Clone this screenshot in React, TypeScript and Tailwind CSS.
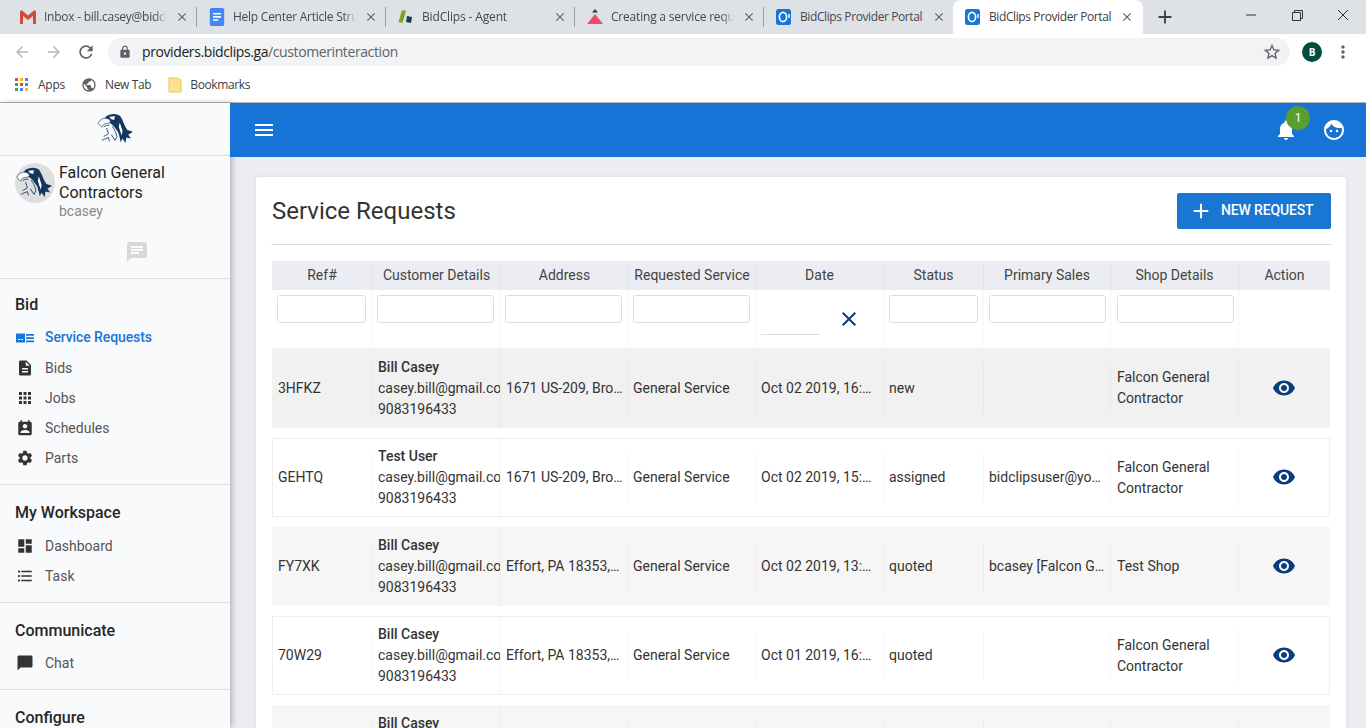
import React from "react";
import {
  MdAdd, MdApps, MdArrowBack, MdArrowForward, MdChat, MdChatBubble, MdClose, MdDashboard, MdDescription, MdFace,
  MdFormatListBulleted, MdLock, MdMenu, MdMoreVert, MdNotifications, MdPermContactCalendar, MdPublic, MdRefresh,
  MdSettings, MdStarBorder, MdVisibility,
} from "react-icons/md";

const Falcon = ({ className }: { className?: string }) => (
  <svg viewBox="0 0 40 34" className={className}>
    <path fill="#12375f" d="M9 4C14 0 22 0 25 4C28 9 29 14 32 18L38 20L33 23L36 27L31 26L30 32L27 27L25 31C24 26 23 22 22 20C19 16 17 13 14 11C11 10 9 10 7 9Z" />
    <path fill="#fff" stroke="#12375f" strokeWidth="0.7" d="M1 11C3 6 9 4 13 7C15 9 14 11 11 11C8 11 6 12 5 15C3 14 2 12 1 11Z" />
    <path fill="#fff" d="M13 4L19 3.5L18 7.5L14.5 6.5Z" />
    <path fill="#fff" d="M24 10L27 19L26 24L23 15Z" />
    <path fill="none" stroke="#12375f" strokeWidth="0.9" d="M7 15C8 13 11 13 13 13M10 16L12 22L7 25M5 29L12 26L13 30M15 23L19 29L21 25M16 14C18 17 20 20 21 25" />
  </svg>
);

const Gmail = () => (
  <svg viewBox="0 0 16 14" className="w-4 h-[14px]">
    <path fill="#d54c3f" d="M0 1.5V14H3V6L8 10L13 6V14H16V1.5L14.5 0L8 5.5L1.5 0Z" />
  </svg>
);
const Docs = () => (
  <svg viewBox="0 0 16 20" className="w-[16px] h-[18px]">
    <path fill="#4285f4" d="M2 0H14C15 0 16 1 16 2V18C16 19 15 20 14 20H2C1 20 0 19 0 18V2C0 1 1 0 2 0Z" />
    <path fill="#fff" d="M3.5 5.5H12.5V7.2H3.5ZM3.5 9H12.5V10.7H3.5ZM3.5 12.5H9.5V14.2H3.5Z" />
  </svg>
);
const Clip = () => (
  <svg viewBox="0 0 16 16" className="w-4 h-4">
    <path fill="#7ba428" d="M4 1L8 2L4.5 14L0.5 13Z" />
    <path fill="#12414d" d="M9 7L14 8L13 14L8 13Z" />
  </svg>
);
const Peak = () => (
  <svg viewBox="0 0 16 16" className="w-4 h-4">
    <path fill="#12414d" d="M8 0L11 3.5H5Z" />
    <path fill="#ee4d65" d="M8 5L16 15H0Z" />
  </svg>
);
const Portal = () => (
  <svg viewBox="0 0 16 16" className="w-4 h-4">
    <rect width="15" height="16" rx="2.5" fill="#1976d2" />
    <ellipse cx="7" cy="8" rx="3.6" ry="4.6" fill="none" stroke="#fff" strokeWidth="1.6" />
    <path stroke="#fff" strokeWidth="1.4" d="M13 5V9" />
  </svg>
);

const tabs = [
  { t: "Inbox - bill.casey@bidclips.com", i: <Gmail />, k: "tracking-[-0.25px]" },
  { t: "Help Center Article Structure", i: <Docs />, k: "tracking-[-0.25px]" },
  { t: "BidClips - Agent", i: <Clip />, k: "tracking-[-0.15px]" },
  { t: "Creating a service request", i: <Peak />, k: "tracking-[-0.2px]" },
  { t: "BidClips Provider Portal", i: <Portal />, k: "tracking-[-0.4px]" },
];

function Tabs() {
  return (
    <div className="h-[34px] bg-[#dee1e6] flex items-center pl-2 shrink-0 relative">
      {tabs.map((x, n) => (
        <div key={n} className="w-[189px] h-[34px] flex items-center pl-[4px]">
          <div className={`w-full h-[20px] flex items-center pl-[8px] pr-[7px] gap-[8px] ${n < 4 ? "border-r border-[#9ca0a6]" : ""}`}>
            <div className="w-4 flex justify-center shrink-0">{x.i}</div>
            <span className={`flex-1 overflow-hidden whitespace-nowrap text-[12px] text-[#45494e] font-['Open_Sans',sans-serif] ${x.k} ${n === 4 ? "" : "[mask-image:linear-gradient(to_right,black_90%,transparent)]"}`}>{x.t}</span>
            <MdClose className="text-[#5f6368] shrink-0" size={14} />
          </div>
        </div>
      ))}
      <div className="w-[190px] h-[34px] bg-white rounded-t-[8px] flex items-center pl-[12px] pr-[9px] gap-[8px]">
        <Portal />
        <span className="flex-1 overflow-hidden whitespace-nowrap text-[12px] tracking-[-0.4px] text-[#3c4043] font-['Open_Sans',sans-serif]">BidClips Provider Portal</span>
        <MdClose className="text-[#5f6368] shrink-0" size={14} />
      </div>
      <MdAdd className="text-[#3c4043] ml-[11px]" size={22} />
      <div className="flex-1" />
      <div className="flex items-center self-start h-[30px] text-[#333]">
        <svg viewBox="0 0 46 16" className="w-[46px] h-4"><path stroke="#333" d="M18 8H28" /></svg>
        <svg viewBox="0 0 46 16" className="w-[46px] h-4"><path stroke="#333" fill="none" d="M18.5 5.5H26.5V13.5H18.5ZM20.5 5.5V3.5H28.5V11.5H26.5" /></svg>
        <svg viewBox="0 0 46 16" className="w-[46px] h-4"><path stroke="#333" d="M18 3L28 13M28 3L18 13" /></svg>
      </div>
    </div>
  );
}

function Toolbar() {
  return (
    <div className="h-[36px] flex items-center bg-white shrink-0">
      <MdArrowBack className="ml-[13px] text-[#b4b7bb]" size={18} />
      <MdArrowForward className="ml-[14px] text-[#b4b7bb]" size={18} />
      <MdRefresh className="ml-[13px] text-[#5f6368]" size={20} />
      <div className="ml-[12px] w-[1182px] h-[28px] rounded-full bg-[#f1f3f4] flex items-center pl-[10px] pr-[8px]">
        <MdLock className="text-[#5f6368]" size={14} />
        <span className="ml-[10px] pb-[2px] text-[14px] font-['Open_Sans',sans-serif] tracking-[-0.4px] text-[#202124]">providers.bidclips.ga<span className="text-[#5f6368]">/customerinteraction</span></span>
        <div className="flex-1" />
        <MdStarBorder className="text-[#5f6368]" size={20} />
      </div>
      <div className="ml-[12px] w-5 h-5 rounded-full bg-[#004d40] text-white text-[10px] font-bold flex items-center justify-center font-['Open_Sans',sans-serif]">B</div>
      <MdMoreVert className="ml-[11px] text-[#5f6368]" size={20} />
    </div>
  );
}

function AppsGrid() {
  const c = ["#ea4335", "#fbbc05", "#4285f4", "#34a853", "#ea4335", "#4285f4", "#34a853", "#4285f4", "#fbbc05"];
  return (
    <div className="grid grid-cols-3 gap-[2px] w-[13px]">
      {c.map((b, i) => (
        <span key={i} className="w-[3px] h-[3px]" style={{ background: b }} />
      ))}
    </div>
  );
}

function Bookmarks() {
  return (
    <div className="h-[33px] pb-[3px] flex items-center bg-white border-b border-[#b4b4b4] text-[12px] text-[#3c4043] font-['Open_Sans',sans-serif] shrink-0 pl-[15px]">
      <AppsGrid />
      <span className="ml-[10px] tracking-[-0.25px]">Apps</span>
      <MdPublic className="ml-[16px] text-[#5f6368]" size={16} />
      <span className="ml-[8px] tracking-[-0.35px]">New Tab</span>
      <svg viewBox="0 0 14 16" className="ml-[17px] w-[14px] h-4"><path fill="#fde293" stroke="#e8c75a" d="M1 1H9L13 3V15H1Z" /></svg>
      <span className="ml-[8px] tracking-[-0.4px]">Bookmarks</span>
    </div>
  );
}

const ReqIcon = () => (
  <svg viewBox="0 0 18 12" className="w-[18px] h-3">
    <path fill="#1976d2" d="M0 1.5H9V10.5H0Z" />
    <path fill="#fff" d="M2 7H4V8H2ZM5 7H7V8H5Z" />
    <path fill="#1976d2" d="M10 2H18V3.7H10ZM10 5.2H18V6.9H10ZM10 8.5H18V10.2H10Z" />
  </svg>
);

function Item({ icon, label, active, tall }: { icon: React.ReactNode; label: string; active?: boolean; tall?: boolean }) {
  return (
    <div className={`${tall ? "h-[31px]" : "h-[30px]"} flex items-center pl-[16px] text-[14px] ${active ? "text-[#1976d2] font-medium tracking-[-0.1px]" : "text-[#555]"}`}>
      <div className="w-[18px] flex justify-center text-[#333]">{icon}</div>
      <span className="ml-[11px]">{label}</span>
    </div>
  );
}

const sectionTitle = "text-[16px] leading-[24px] font-medium text-[#262626] pl-[15px]";

function Sidebar() {
  return (
    <aside className="w-[230px] shrink-0 bg-[#f9fafc] shadow-[2px_0_6px_rgba(0,0,0,0.25)] z-10 font-[Roboto,sans-serif] overflow-hidden">
      <div className="h-[53px] border-b border-[#dcdde0] flex items-center justify-center pl-[1px]">
        <Falcon className="w-[38px] h-[32px]" />
      </div>
      <div className="h-[123px] border-b border-[#dcdde0]">
        <div className="flex pl-[15px] pt-[7px]">
          <div className="w-[40px] h-[40px] rounded-full bg-[#dedede] flex items-center justify-center shrink-0">
            <Falcon className="w-[38px] h-[34px]" />
          </div>
          <div className="ml-[4px]">
            <div className="text-[16px] leading-[20px] text-[#222]">Falcon General<br />Contractors</div>
            <div className="text-[14px] leading-[18px] text-[#888] -mt-[1px]">bcasey</div>
          </div>
        </div>
        <MdChat className="text-[#d8d8d8] ml-[125px] mt-[20px]" size={24} />
      </div>
      <section className="h-[206px] border-b border-[#dcdde0] pt-[14px]">
        <h3 className={`${sectionTitle} mb-[5px]`}>Bid</h3>
        <Item icon={<ReqIcon />} label="Service Requests" active tall />
        <Item icon={<MdDescription size={20} />} label="Bids" />
        <Item icon={<MdApps size={22} />} label="Jobs" />
        <Item icon={<MdPermContactCalendar size={21} />} label="Schedules" />
        <Item icon={<MdSettings size={22} />} label="Parts" />
      </section>
      <section className="h-[118px] border-b border-[#dcdde0] pt-[16px]">
        <h3 className={`${sectionTitle} mb-[6px]`}>My Workspace</h3>
        <Item icon={<MdDashboard size={22} />} label="Dashboard" />
        <Item icon={<MdFormatListBulleted size={22} />} label="Task" />
      </section>
      <section className="h-[87px] border-b border-[#dcdde0] pt-[16px]">
        <h3 className={`${sectionTitle} mb-[5px]`}>Communicate</h3>
        <Item icon={<MdChatBubble size={22} />} label="Chat" />
      </section>
      <section className="pt-[16px]">
        <h3 className={sectionTitle}>Configure</h3>
      </section>
    </aside>
  );
}

const gridCols = "grid grid-cols-[100px_128px_128px_127px_128px_100px_127px_128px_92px]";
const heads = ["Ref#", "Customer Details", "Address", "Requested Service", "Date", "Status", "Primary Sales", "Shop Details", "Action"];
const filterPad = ["pl-[5px] pr-[6px]", "pl-[4px] pr-[6px]", "pl-[4px] pr-[6px]", "pl-[4px] pr-[5px]", "pl-[4px]", "pl-[5px] pr-[5px]", "pl-[5px] pr-[4px]", "pl-[6px] pr-[4px]", ""];

const boxed = "bg-white h-[79px] ring-1 ring-inset ring-[#eeeeee] mt-[10px]";
const shaded = "bg-[#f6f6f6] h-[79px] mt-[10px]";

const rows = [
  { ref: "3HFKZ", name: "Bill Casey", addr: "1671 US-209, Brodheadsville, PA", date: "Oct 02 2019, 16:30:21", status: "new", sales: "", shop: "Falcon General Contractor", cls: "bg-[#f1f1f1] h-[80px]" },
  { ref: "GEHTQ", name: "Test User", addr: "1671 US-209, Brodheadsville, PA", date: "Oct 02 2019, 15:12:40", status: "assigned", sales: "bidclipsuser@yopmail.com", shop: "Falcon General Contractor", cls: boxed },
  { ref: "FY7XK", name: "Bill Casey", addr: "Effort, PA 18353,…", date: "Oct 02 2019, 13:44:05", status: "quoted", sales: "bcasey [Falcon General]", shop: "Test Shop", cls: shaded },
  { ref: "70W29", name: "Bill Casey", addr: "Effort, PA 18353,…", date: "Oct 01 2019, 16:02:18", status: "quoted", sales: "", shop: "Falcon General Contractor", cls: boxed },
  { ref: "K2M8P", name: "Bill Casey", addr: "Effort, PA 18353,…", date: "Oct 01 2019, 14:20:33", status: "quoted", sales: "", shop: "Falcon General Contractor", cls: shaded },
];

const line = "border-l border-black/[0.03]";

function Row({ r }: { r: (typeof rows)[number] }) {
  const cell = `h-[50px] self-center ${line} flex items-center min-w-0`;
  return (
    <div className={`${gridCols} ${r.cls} text-[14px] leading-[21px] text-[#333]`}>
      <div className="self-center pl-[6px]">{r.ref}</div>
      <div className={`${cell} pl-[5px]`}>
        <div className="w-full overflow-x-clip whitespace-nowrap">
          <div className="font-medium">{r.name}</div>
          <div>casey.bill@gmail.com</div>
          <div>9083196433</div>
        </div>
      </div>
      <div className={`border-l border-black/[0.04] flex items-center pl-[5px] pr-[5px] min-w-0`}>
        <div className="truncate">{r.addr}</div>
      </div>
      <div className={`${cell} pl-[4px]`}>General Service</div>
      <div className={`${cell} pl-[5px] pr-[11px]`}>
        <div className="truncate">{r.date}</div>
      </div>
      <div className={`${cell} pl-[5px]`}>{r.status}</div>
      <div className={`${cell} pl-[5px] pr-[5px]`}>
        <div className="truncate">{r.sales}</div>
      </div>
      <div className={`${cell} pl-[6px]`}>{r.shop}</div>
      <div className={`${line} h-[56px] self-center flex items-center justify-center pr-[2px] pb-[1px]`}>
        <MdVisibility className="text-[#0b3c7d]" size={24} />
      </div>
    </div>
  );
}

function Card() {
  return (
    <div className="w-[1090px] bg-white rounded-[3px] shadow-[0_0_4px_rgba(0,0,0,0.08)] pt-[16px] pl-[15px] pr-[15px] pb-[20px]">
      <div className="flex items-center justify-between h-[36px] pl-[1px]">
        <h1 className="text-[24px] font-normal text-[#333]">Service Requests</h1>
        <button className="w-[154px] h-[36px] bg-[#1976d2] rounded-[2px] text-white text-[14px] font-medium flex items-center pl-[14px] pb-[1px]">
          <MdAdd size={20} className="scale-125" />
          <span className="ml-[10px] tracking-[-0.15px]">NEW REQUEST</span>
        </button>
      </div>
      <div className="mt-[15px] border-b border-[#dddddd]" />
      <div className="mt-[16px] ml-[1px] w-[1058px]">
        <div className={`${gridCols} h-[29px] bg-[#ebedf2] text-[14px] text-[#444]`}>
          {heads.map((h, i) => (
            <div key={h} className={`flex items-center justify-center whitespace-nowrap ${i ? "border-l border-[#dfe2e8]" : ""}`}>{h}</div>
          ))}
        </div>
        <div className={`${gridCols} h-[58px]`}>
          {heads.map((h, i) => (
            <div key={h} className={`pt-[5px] ${i ? "border-l border-[#f8f8f8]" : ""} ${filterPad[i]}`}>
              {i === 4 ? (
                <div className="flex items-start">
                  <div className="w-[59px] h-[40px] ml-[1px] border-b border-[#dddddd]" />
                  <MdClose className="text-[#0b3c7d] ml-[17px] mt-[12px]" size={24} />
                </div>
              ) : i === 8 ? null : (
                <input aria-label={h} className="w-full h-[28px] border border-[#dddddd] rounded-[3px] bg-white" />
              )}
            </div>
          ))}
        </div>
        {rows.map((r) => (
          <Row key={r.ref} r={r} />
        ))}
      </div>
    </div>
  );
}

export default function App() {
  return (
    <div className="w-[1366px] h-[728px] overflow-hidden flex flex-col bg-white font-[Roboto,sans-serif]">
      <Tabs />
      <Toolbar />
      <Bookmarks />
      <div className="flex flex-1 min-h-0">
        <Sidebar />
        <div className="flex-1 flex flex-col min-w-0 bg-[#ebedf2]">
          <header className="h-[54px] bg-[#1574d6] flex items-center pl-[22px] pr-[20px] text-white relative z-20 shrink-0">
            <MdMenu size={24} />
            <div className="flex-1" />
            <div className="relative mr-[24px] flex">
              <MdNotifications size={24} />
              <span className="absolute top-[-12px] left-[12px] w-[24px] h-[24px] rounded-full bg-[#5a9e2f] text-[12px] flex items-center justify-center">1</span>
            </div>
            <MdFace size={24} />
          </header>
          <main className="flex-1 min-h-0 overflow-hidden pl-[26px] pt-[20px]">
            <Card />
          </main>
        </div>
      </div>
    </div>
  );
}
